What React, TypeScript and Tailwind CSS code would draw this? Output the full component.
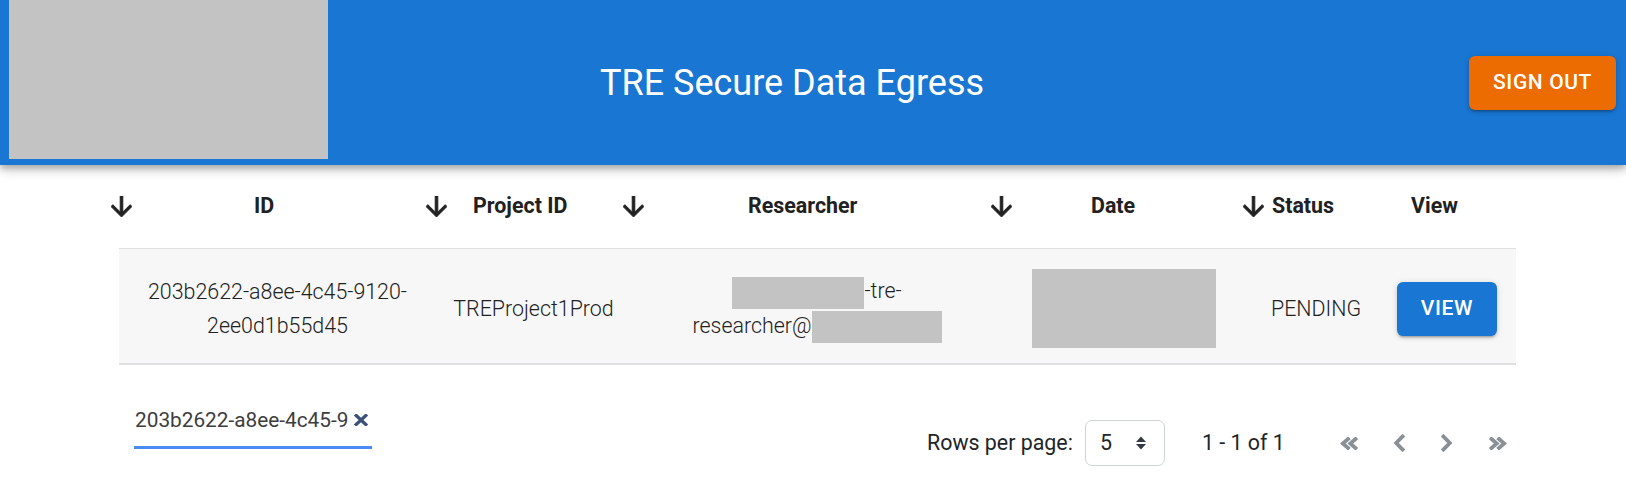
import React from 'react'

function SortArrow() {
  return (
    <svg viewBox="4 4 16 16" className="h-[21px] w-[21px] shrink-0" fill="#212121" stroke="#212121" strokeWidth="0.7">
      <path d="M20 12l-1.41-1.41L13 16.17V4h-2v12.17l-5.58-5.59L4 12l8 8 8-8z" />
    </svg>
  )
}

function Redacted({ w }: { w: string }) {
  return <span className={`inline-block h-[32px] bg-[#c3c3c3] align-middle ${w}`} />
}

function PageIcon({ kind }: { kind: 'first' | 'prev' | 'next' | 'last' }) {
  const stroke = { fill: 'none', stroke: '#8a9096', strokeWidth: 3.8, strokeLinecap: 'square' as const }
  if (kind === 'first')
    return (
      <svg width="18" height="13" viewBox="0 0 18 13">
        <polyline points="8,2 2.8,6.5 8,11" {...stroke} />
        <polyline points="15.5,2 10.3,6.5 15.5,11" {...stroke} />
      </svg>
    )
  if (kind === 'last')
    return (
      <svg width="18" height="13" viewBox="0 0 18 13">
        <polyline points="2.5,2 7.7,6.5 2.5,11" {...stroke} />
        <polyline points="10,2 15.2,6.5 10,11" {...stroke} />
      </svg>
    )
  if (kind === 'prev')
    return (
      <svg width="12" height="18" viewBox="0 0 12 18">
        <polyline points="9.5,2.5 3.2,9 9.5,15.5" {...stroke} />
      </svg>
    )
  return (
    <svg width="12" height="18" viewBox="0 0 12 18">
      <polyline points="2.5,2.5 8.8,9 2.5,15.5" {...stroke} />
    </svg>
  )
}

export default function App() {
  return (
    <div className="min-h-[487px] bg-white font-['Roboto',sans-serif]">
      <header className="relative z-10 flex h-[165px] items-center bg-[#1976d2] shadow-[0_3px_6px_-1px_rgba(0,0,0,0.2),0_6px_8px_0_rgba(0,0,0,0.14),0_1px_15px_0_rgba(0,0,0,0.12)]">
        <div className="ml-[9px] h-[159px] w-[319px] self-start bg-[#c3c3c3]" />
        <h1 className="ml-[272px] text-[36px] leading-none text-white">TRE Secure Data Egress</h1>
        <button className="ml-auto mr-[10px] h-[54px] w-[147px] rounded-[6px] bg-[#ed6c02] text-[21px] font-medium uppercase tracking-[0.6px] text-white shadow-[0_3px_2px_-2px_rgba(0,0,0,0.2),0_2px_3px_0_rgba(0,0,0,0.14),0_1px_7px_0_rgba(0,0,0,0.12)]">
          Sign Out
        </button>
      </header>

      {/* column headings */}
      <div className="flex h-[83px] items-center text-[21.4px] font-bold text-[#212121]">
        <div className="w-[111px] shrink-0" />
        <SortArrow />
        <div className="w-[294px] shrink-0 pl-[122px]">ID</div>
        <SortArrow />
        <div className="w-[176px] shrink-0 pl-[26px]">Project ID</div>
        <SortArrow />
        <div className="w-[347px] shrink-0 pl-[104px]">Researcher</div>
        <SortArrow />
        <div className="w-[231px] shrink-0 pl-[79px]">Date</div>
        <SortArrow />
        <div className="w-[147px] shrink-0 pl-[8px]">Status</div>
        <div>View</div>
      </div>

      {/* the single request row */}
      <div className="ml-[119px] flex h-[117px] w-[1397px] items-center border-t border-b-2 border-[#e0e0e3] bg-[#f7f7f7] pt-[5px] text-[21.4px] font-light leading-[34px] text-[#212121]">
        <div className="w-[317px] shrink-0 text-center">
          203b2622-a8ee-4c45-9120-
          <br />
          2ee0d1b55d45
        </div>
        <div className="w-[195px] shrink-0 text-center">TREProject1Prod</div>
        <div className="w-[372px] shrink-0 text-center">
          <div>
            <Redacted w="w-[132px]" />
            -tre-
          </div>
          <div>
            researcher@
            <Redacted w="w-[130px]" />
          </div>
        </div>
        <div className="w-[213px] shrink-0 pl-[29px]">
          <div className="h-[79px] w-[184px] bg-[#c3c3c3]" />
        </div>
        <div className="w-[181px] shrink-0 pl-[55px]">PENDING</div>
        <button className="h-[54px] w-[100px] shrink-0 rounded-[6px] bg-[#1976d2] text-[21px] font-medium uppercase leading-none tracking-[0.6px] text-white shadow-[0_3px_2px_-2px_rgba(0,0,0,0.2),0_2px_3px_0_rgba(0,0,0,0.14),0_1px_7px_0_rgba(0,0,0,0.12)]">
          View
        </button>
      </div>

      {/* filter + pagination */}
      <div className="flex items-start pl-[134px] pt-[39px]">
        <div className="flex w-[238px] shrink-0 items-center border-b-[3px] border-[#4a8af4] pb-[10px] text-[20.8px] leading-[32px] text-[#3d3d3d]">
          <span className="pl-[1px]">203b2622-a8ee-4c45-9</span>
          <svg width="14" height="12" viewBox="0 0 14 12" className="ml-[6px]">
            <path d="M2.2 1.5l9.6 9M11.8 1.5l-9.6 9" stroke="#3b5178" strokeWidth="3.2" strokeLinecap="square" />
          </svg>
        </div>
        <div className="ml-[555px] mt-[16px] flex h-[46px] items-center text-[21.4px] text-[#212529]">
          <span>Rows per page:</span>
          <div className="ml-[12px] flex h-[46px] w-[80px] items-center justify-between rounded-[7px] border border-[#ced4da] pl-[14px] pr-[17px]">
            <span>5</span>
            <svg width="12" height="16" viewBox="0 0 12 16" fill="#343a40">
              <path d="M6 1.5L11 7H1z" />
              <path d="M6 14.5L1 9h10z" />
            </svg>
          </div>
          <span className="ml-[37px]">1 - 1 of 1</span>
          <div className="ml-[55px] flex items-center">
            <PageIcon kind="first" />
            <span className="ml-[35px] flex"><PageIcon kind="prev" /></span>
            <span className="ml-[36px] flex"><PageIcon kind="next" /></span>
            <span className="ml-[36px] flex"><PageIcon kind="last" /></span>
          </div>
        </div>
      </div>
    </div>
  )
}
